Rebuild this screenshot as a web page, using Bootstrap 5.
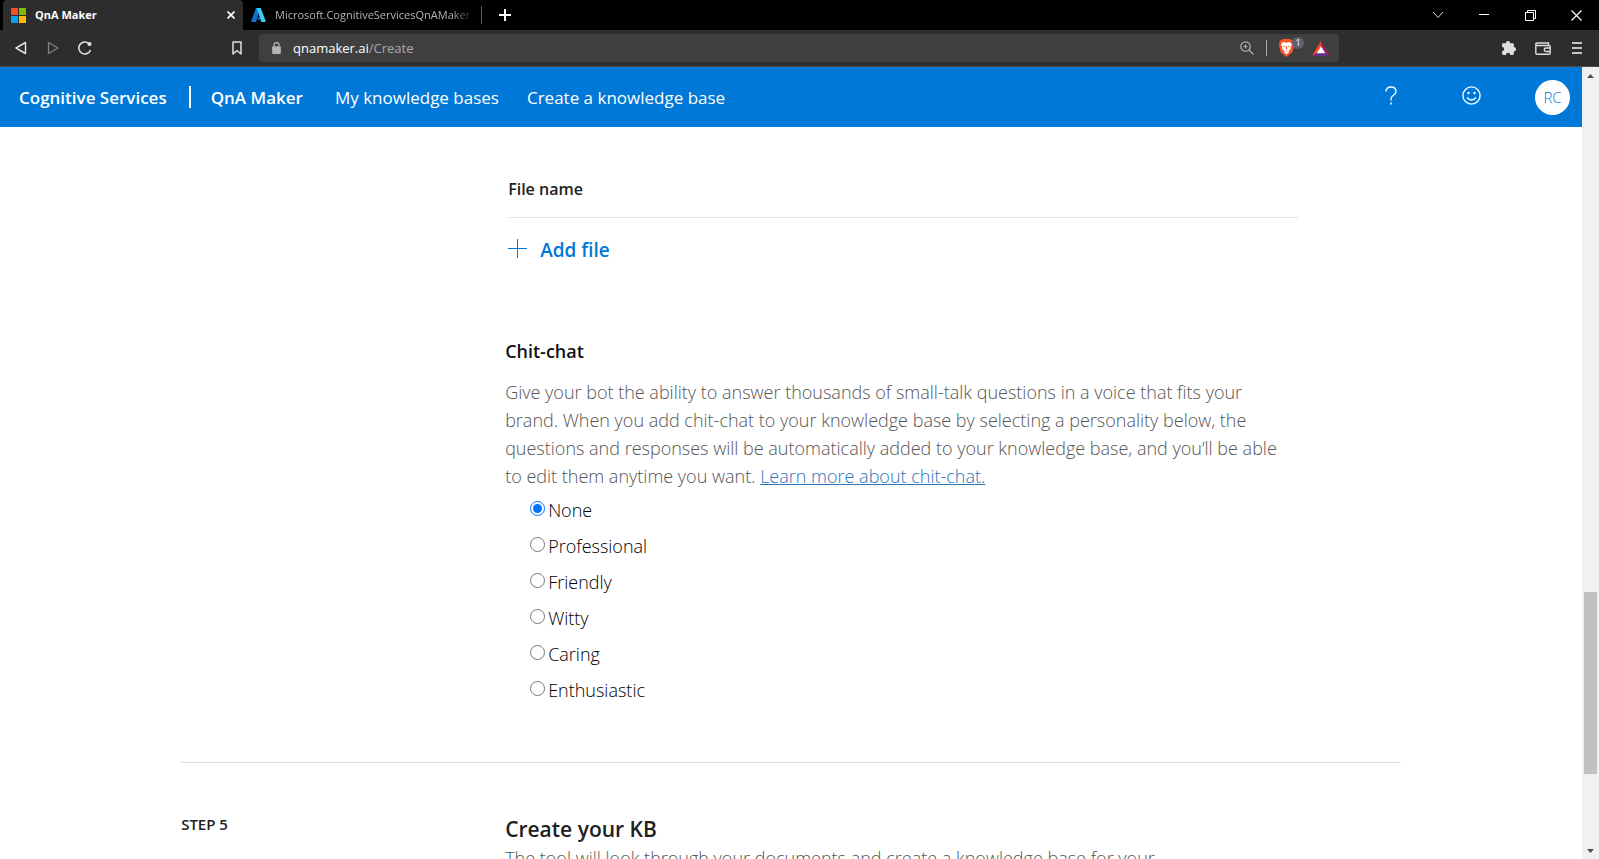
<!DOCTYPE html>
<html lang="en">
<head>
<meta charset="utf-8">
<meta name="viewport" content="width=device-width, initial-scale=1">
<title>QnA Maker</title>
<link rel="stylesheet" href="https://cdn.jsdelivr.net/npm/bootstrap@5.3.0/dist/css/bootstrap.min.css">
<style>
  body { font-family: "Open Sans", "Noto Sans", sans-serif; color: #212121; background: #fff; }
  button { padding: 0; border: 0; background: none; color: inherit; display: inline-flex; align-items: center; justify-content: center; }
  svg { display: block; flex: none; }

  /* browser chrome */
  .tab-strip { height: 30px; background: #000; color: #fff; font-size: 11px; line-height: 16px; padding-left: 3px; }
  .tab-item { width: 240px; padding: 0 8px; gap: 9px; }
  .tab-item.current { background: #2d2d2d; font-weight: 700; border-radius: 4px 4px 0 0; }
  .tab-item.idle { width: 239px; padding-right: 6px; color: #b4b4b4; border-right: 1px solid #5c5c5c; margin: 6px 0; }
  .tab-title { overflow: hidden; white-space: nowrap; flex: 1 1 0; min-width: 0; }
  .idle .tab-title { -webkit-mask-image: linear-gradient(90deg, #000 88%, transparent); mask-image: linear-gradient(90deg, #000 88%, transparent); }
  .win-btn { width: 46px; height: 30px; }
  .tool-strip { height: 37px; background: #2d2d2d; color: #dedede; border-bottom: 1px solid #4d4d4d; padding: 0 6px 0 5px; }
  .tool-btn { width: 32px; height: 32px; }
  .mark-btn { margin: 0 6px 0 120px; }
  .tool-group { gap: 2px; }
  .address { height: 28px; width: 1080px; flex: 0 1 auto; background: #3f3f3f; border-radius: 4px; font-size: 13px; line-height: 18px; padding: 0 9px 0 13px; gap: 12px; color: #ababab; }
  .address b { font-weight: 400; color: #fff; }
  .shield { position: relative; margin-right: 6px; }
  .shield-count { position: absolute; left: 13px; top: -2px; width: 12px; height: 12px; border-radius: 6px; background: #5e6175; color: #fff; font-size: 9px; line-height: 12px; text-align: center; }

  /* site header */
  .site-bar { height: 60px; background: #0078d7; color: #fff; font-size: 17px; line-height: 24px; padding: 0 12px 0 19px; }
  .site-bar a { color: #fff; text-decoration: none; padding-top: 2px; }
  .site-bar .brand-link { font-weight: 600; }
  .bar-rule { width: 2px; height: 22px; background: #fff; margin: 0 20px 0 22px; }
  .site-links { gap: 28px; margin-left: 32px; }
  .help-btn { margin-right: 65px; }
  .mood-btn { margin-right: 54px; }
  .avatar { width: 35px; height: 35px; border-radius: 50%; background: #fff; color: #0078d7; font-size: 15px; font-weight: 300; }

  /* page */
  .page-body { width: 77.1%; margin: 0 auto; }
  .sources { padding-top: 50px; }
  .step-side { width: 324px; flex: none; }
  .files { width: 790px; margin: 0 0 0 3px; }
  .files th { font-size: 16px; line-height: 24px; font-weight: 600; padding: 0 0 16px; border-bottom: 1px solid #e3e3e3; }
  .files td { padding: 19px 0 0; }
  .add-file { color: #0078d7; font-size: 19px; line-height: 26px; font-weight: 600; gap: 13px; }
  .sub-title { font-size: 18px; line-height: 26px; font-weight: 600; color: #111; margin: 74px 0 14px; }
  .copy { font-size: 18px; line-height: 28px; font-weight: 300; color: #555; max-width: 790px; margin: 0; }
  .copy a { color: #2a74b8; }
  .choices { padding: 2px 0 0 25px; }
  .choice { height: 36px; font-size: 18px; line-height: 26px; font-weight: 300; gap: 3px; color: #000; }
  .choice input { width: 15px; height: 15px; margin: 0 0 2px; accent-color: #0075ff; }
  .step-rule { border: 0; border-top: 1px solid #ddd; margin: 54px 0 0; opacity: 1; }
  .step-name { font-size: 15px; line-height: 22px; font-weight: 600; padding-top: 2px; }
  .step-title { font-size: 21px; line-height: 30px; font-weight: 600; margin: 0; padding-top: 3px; }

  /* scroll track */
  .track { width: 17px; flex: none; background: #f1f1f1; }
  .track button { height: 17px; }
  .above-thumb { height: 67%; }
  .thumb { width: 13px; height: 24%; background: #c1c1c1; }
</style>
</head>
<body class="vh-100 d-flex flex-column overflow-hidden">

<div class="tab-strip d-flex align-items-stretch flex-shrink-0">
  <div class="tab-item current d-flex align-items-center">
    <svg width="15" height="15"><path fill="#f25022" d="M0 0h7v7H0z"/><path fill="#7fba00" d="M8 0h7v7H8z"/><path fill="#00a4ef" d="M0 8h7v7H0z"/><path fill="#ffb900" d="M8 8h7v7H8z"/></svg>
    <span class="tab-title">QnA Maker</span>
    <button aria-label="Close tab"><svg width="8" height="8" stroke="#fff" stroke-width="1.6"><path d="M.5.5l7 7M7.500.5l-7 7"/></svg></button>
  </div>
  <div class="tab-item idle d-flex align-items-center">
    <svg width="15" height="14" viewBox="0 0 15 14"><path fill="#1173c7" d="M5 0h4.500L5 14H.9Q0 14 .2 13z"/><path fill="#0a5ba8" d="M4 9h7l-2 4z"/><path fill="#3ccbf4" d="M5.500 0h4.300l4.900 13q.2 1-.8 1H9.600q.9-.4.600-1.200z"/></svg>
    <span class="tab-title">Microsoft.CognitiveServicesQnAMaker</span>
  </div>
  <button class="win-btn" aria-label="New tab"><svg width="12" height="12" stroke="#fff" stroke-width="2"><path d="M6 0v12M0 6h12"/></svg></button>
  <div class="ms-auto d-flex">
    <button class="win-btn" aria-label="Search tabs"><svg width="12" height="8" fill="none" stroke="#ddd"><path d="M1 1l5 5.500L11 1"/></svg></button>
    <button class="win-btn" aria-label="Minimize"><svg width="10" height="2" fill="#fff"><path d="M0 0h10v1H0z"/></svg></button>
    <button class="win-btn" aria-label="Restore"><svg width="11" height="11" fill="none" stroke="#fff"><path d="M.5 2.500h8v8h-8zM2.500 2.500v-2h8v8h-2"/></svg></button>
    <button class="win-btn" aria-label="Close"><svg width="11" height="11" stroke="#fff" stroke-width="1.200"><path d="M.5.5l10 10M10.500.5l-10 10"/></svg></button>
  </div>
</div>

<div class="tool-strip d-flex align-items-center flex-shrink-0">
  <div class="d-flex">
    <button class="tool-btn" aria-label="Back"><svg width="12" height="14" fill="none" stroke="#dedede" stroke-width="1.500" stroke-linejoin="round"><path d="M10.500 1.500v11L1 7z"/></svg></button>
    <button class="tool-btn" aria-label="Forward"><svg width="12" height="14" fill="none" stroke="#808080" stroke-width="1.300" stroke-linejoin="round"><path d="M1.500 1.500v11L11 7z"/></svg></button>
    <button class="tool-btn" aria-label="Reload"><svg width="14" height="14" fill="none" stroke="#dedede" stroke-width="1.600"><path d="M12.500 9A6 6 0 1 1 11 2.700"/><circle cx="11.500" cy="3" r="2.100" fill="#dedede" stroke="none"/></svg></button>
  </div>
  <button class="tool-btn mark-btn" aria-label="Bookmark"><svg width="10" height="14" fill="none" stroke="#dedede" stroke-width="1.500" stroke-linejoin="round"><path d="M1 1h8v12L5 9.500 1 13z"/></svg></button>
  <div class="address d-flex align-items-center">
    <svg width="9" height="12" viewBox="0 0 8 11"><rect y="4" width="8" height="7" rx="1" fill="#b5b5b5"/><path d="M1.700 4V2.800a2.300 2.300 0 0 1 4.600 0V4" fill="none" stroke="#b5b5b5" stroke-width="1.200"/></svg>
    <span class="flex-grow-1"><b>qnamaker.ai</b>/Create</span>
    <button aria-label="Zoom"><svg width="14" height="14" fill="none" stroke="#b0b0b0" stroke-width="1.200"><circle cx="5.500" cy="5.500" r="4.700"/><path d="M9 9l4.500 4.500M3.500 5.500h4M5.500 3.500v4"/></svg></button>
    <svg width="1" height="16"><path fill="#aaa" d="M0 0h1v16H0z"/></svg>
    <button class="shield" aria-label="Shields"><svg width="15" height="18" viewBox="0 0 15 18"><path fill="#fb542b" d="M3.500 0h8l1.300 1.500 1.400-.1.800 3-.4 1.400.2 2-1.500 5.400L7.500 18l-5.800-4.800L.2 7.800l.2-2L0 4.400l.8-3 1.400.1z"/><path fill="#fff" d="M4 3l3.500.7L11 3l2 2.500-1.500 3 .2 2-2 1 .3 1.800-2.500 2-2.500-2 .3-1.800-2-1 .2-2L2 5.500z"/><path fill="#fb542b" d="M3.500 6.500l2.500.7-.5 1zM11.500 6.500L9 7.200l.5 1zM7 7h1l.2 3-.7.700-.7-.7zM5.500 11.800l2 .6 2-.6-2 1.500z"/></svg><span class="shield-count">1</span></button>
    <button aria-label="Rewards"><svg width="18" height="15" viewBox="0 0 18 15"><path fill="#ff4724" d="M9 0v5.300L4.700 12.300 0 15z"/><path fill="#9e1f63" d="M9 0l9 15-4.700-2.700L9 5.300z"/><path fill="#662d91" d="M0 15l4.700-2.700h8.600L18 15z"/><path fill="#fff" d="M9 5.300l4.300 7H4.700z"/></svg></button>
  </div>
  <div class="tool-group d-flex ms-auto">
    <button class="tool-btn" aria-label="Extensions"><svg width="16" height="16" viewBox="0 0 15 15"><path fill="#dedede" d="M1 4q0-1 1-1h2.500a2.100 2.100 0 1 1 4.200 0H11q1 0 1 1v2.500a2.100 2.100 0 1 1 0 4.200V13q0 1-1 1H8.700a2 2 0 0 0-4 0H2q-1 0-1-1v-2.500a2 2 0 0 0 0-4z"/></svg></button>
    <button class="tool-btn" aria-label="Wallet"><svg width="16" height="13" fill="none" stroke="#dedede" stroke-width="1.400"><path d="M13.500 3.500V1H2Q.8 1 .8 2.300V11q0 1.200 1.200 1.200h12q1.200 0 1.200-1.200V4.700q0-1.200-1.200-1.200H2Q.8 3.500.8 2.300M15.200 6H11q-1.800 0-1.800 1.700T11 9.500h4.200"/></svg></button>
    <button class="tool-btn" aria-label="Menu"><svg width="10" height="12" fill="#c4c4c4"><path d="M0 0h10v2H0zM0 5h10v2H0zM0 10h10v2H0z"/></svg></button>
  </div>
</div>

<div class="d-flex flex-grow-1 overflow-hidden">
  <div class="flex-grow-1 overflow-hidden">
    <header class="site-bar d-flex align-items-center">
      <a class="brand-link" href="#">Cognitive Services</a>
      <span class="bar-rule"></span>
      <a class="brand-link" href="#">QnA Maker</a>
      <nav class="site-links d-flex">
        <a href="#">My knowledge bases</a>
        <a href="#">Create a knowledge base</a>
      </nav>
      <div class="d-flex align-items-center ms-auto">
        <button class="help-btn mb-1" aria-label="Help"><svg width="12" height="19" fill="none" stroke="#fff" stroke-width="1.300"><path d="M1 5.500Q1 1 6 1t5 4.500q0 2-2.500 3.800T6 13v1.500"/><path d="M6 16.500v2" stroke-width="1.600"/></svg></button>
        <button class="mood-btn mb-1" aria-label="Feedback"><svg width="19" height="19" fill="none" stroke="#fff" stroke-width="1.400"><circle cx="9.500" cy="9.500" r="8.600"/><path d="M5 11.500q4.500 5 9 0"/><circle cx="6.500" cy="7" r="1.200" fill="#fff" stroke="none"/><circle cx="12.500" cy="7" r="1.200" fill="#fff" stroke="none"/></svg></button>
        <button class="avatar">RC</button>
      </div>
    </header>

    <main class="page-body">
      <section class="sources d-flex">
        <div class="step-side"></div>
        <div class="flex-grow-1">
          <table class="files">
            <thead><tr><th scope="col">File name</th></tr></thead>
            <tbody><tr><td><button class="add-file"><svg class="mb-1" width="19" height="19" fill="#0078d7"><path d="M9 0h1v19H9zM0 9h19v1H0z"/></svg>Add file</button></td></tr></tbody>
          </table>
          <h3 class="sub-title">Chit-chat</h3>
          <p class="copy">Give your bot the ability to answer thousands of small-talk questions in a voice that fits your brand. When you add chit-chat to your knowledge base by selecting a personality below, the questions and responses will be automatically added to your knowledge base, and you’ll be able to edit them anytime you want. <a href="#">Learn more about chit-chat.</a></p>
          <div class="choices" role="radiogroup" aria-label="Chit-chat personality">
            <div class="choice d-flex align-items-center"><input type="radio" name="tone" id="t1" checked><label for="t1">None</label></div>
            <div class="choice d-flex align-items-center"><input type="radio" name="tone" id="t2"><label for="t2">Professional</label></div>
            <div class="choice d-flex align-items-center"><input type="radio" name="tone" id="t3"><label for="t3">Friendly</label></div>
            <div class="choice d-flex align-items-center"><input type="radio" name="tone" id="t4"><label for="t4">Witty</label></div>
            <div class="choice d-flex align-items-center"><input type="radio" name="tone" id="t5"><label for="t5">Caring</label></div>
            <div class="choice d-flex align-items-center"><input type="radio" name="tone" id="t6"><label for="t6">Enthusiastic</label></div>
          </div>
        </div>
      </section>
      <hr class="step-rule">
      <section class="d-flex pt-5">
        <div class="step-side step-name">STEP 5</div>
        <div class="flex-grow-1">
          <h2 class="step-title">Create your KB</h2>
          <p class="copy">The tool will look through your documents and create a knowledge base for your</p>
        </div>
      </section>
    </main>
  </div>

  <div class="track d-flex flex-column align-items-center">
    <button aria-label="Scroll up"><svg width="7" height="4" fill="#505050"><path d="M0 4l3.500-4L7 4z"/></svg></button>
    <div class="flex-grow-1 d-flex flex-column align-items-center w-100">
      <div class="above-thumb"></div>
      <div class="thumb"></div>
    </div>
    <button aria-label="Scroll down"><svg width="7" height="4" fill="#505050"><path d="M0 0l3.500 4L7 0z"/></svg></button>
  </div>
</div>

<script src="https://cdn.jsdelivr.net/npm/bootstrap@5.3.0/dist/js/bootstrap.bundle.min.js"></script>
</body>
</html>
